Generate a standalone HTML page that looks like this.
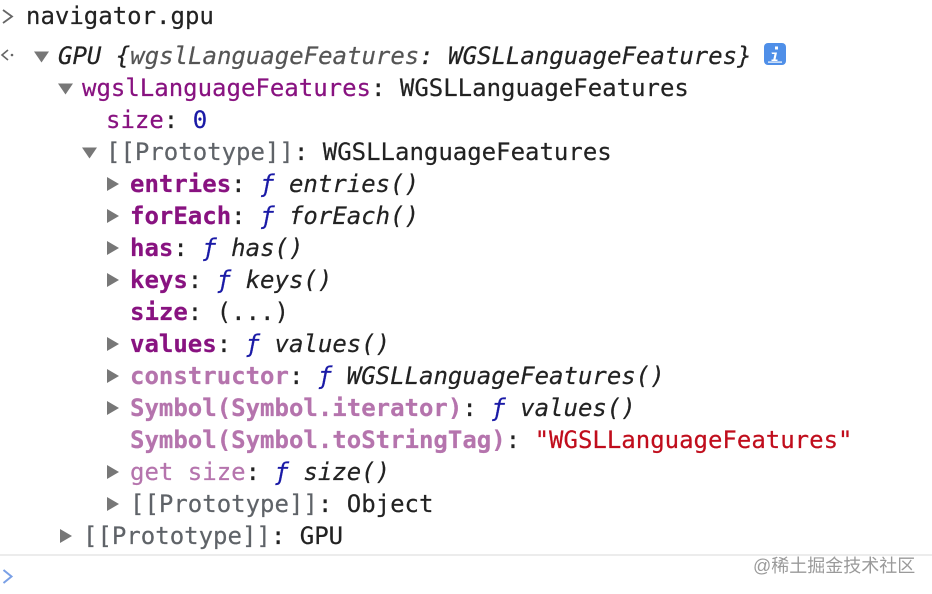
<!DOCTYPE html>
<html><head><meta charset="utf-8">
<style>
html,body{margin:0;padding:0;background:#fff;width:932px;height:594px;overflow:hidden}
#c{position:relative;width:932px;height:594px;font-family:"DejaVu Sans Mono","Liberation Mono",monospace;font-size:24px;line-height:32px;color:#222}
.l{position:absolute;white-space:pre;height:32px;-webkit-text-stroke:0.2px currentColor;filter:blur(0.3px)}
.p{color:#881280}.b{color:#881280;font-weight:bold}.d{color:#b574ad}
.g{color:#5f6368}.n{color:#1a1aa6}.r{color:#c00d1c}.i{font-style:italic}
.k{color:#222}.gi{color:#555;font-style:italic}
.f{color:#1a1aa6;font-style:italic}
svg{position:absolute;left:0;top:0}
.w{position:absolute;left:753px;top:555px;font:18px/22px "Liberation Sans","Noto Sans CJK SC",sans-serif;color:#9a9a9a;white-space:pre}
</style></head><body><div id="c">
<svg width="932" height="594" viewBox="0 0 932 594">
<path d="M3 10l9 6.5-9 6.5" fill="none" stroke="#666" stroke-width="1.8"/>
<path d="M8 50l-6 5 6 5" fill="none" stroke="#666" stroke-width="1.6"/><circle cx="12" cy="55" r="1.3" fill="#666"/>
<path d="M34 51.5h15l-7.500 11z" fill="#777"/>
<path d="M58 83.500h15l-7.500 11z" fill="#777"/>
<path d="M82 147.500h15l-7.500 11z" fill="#777"/>
<path d="M107 177v14l12-7z" fill="#777"/>
<path d="M107 209v14l12-7z" fill="#777"/>
<path d="M107 241v14l12-7z" fill="#777"/>
<path d="M107 273v14l12-7z" fill="#777"/>
<path d="M107 337v14l12-7z" fill="#777"/>
<path d="M107 369v14l12-7z" fill="#777"/>
<path d="M107 401v14l12-7z" fill="#777"/>
<path d="M107 465v14l12-7z" fill="#777"/>
<path d="M107 497v14l12-7z" fill="#777"/>
<path d="M60 529v14l12-7z" fill="#777"/>
<rect x="764" y="43" width="22" height="22" rx="4" fill="#4f8fe8"/>
<path d="M775 46.500h3v3h-3zM771.500 52.500h5.500l-1.500 7h2v1.500h-6v-1.500h1.800l1.200-5.500h-2.500z" fill="#fff"/>
<rect x="768" y="61.500" width="14" height="1.200" fill="#fff"/>
<rect x="0" y="554" width="932" height="2" fill="#ececec"/>
<path d="M3.500 570l8 6.500-8 6.500" fill="none" stroke="#7aa0e6" stroke-width="2"/>
</svg>
<div class="l" style="left:26px;top:0">navigator.gpu</div>
<div class="l i" style="left:58px;top:40px">GPU {<span class="gi">wgslLanguageFeatures</span>: WGSLLanguageFeatures}</div>
<div class="l" style="left:82px;top:72px"><span class="p">wgslLanguageFeatures</span>: WGSLLanguageFeatures</div>
<div class="l" style="left:106px;top:104px"><span class="p">size</span>: <span class="n">0</span></div>
<div class="l" style="left:106px;top:136px"><span class="g">[[Prototype]]</span>: WGSLLanguageFeatures</div>
<div class="l" style="left:130px;top:168px"><span class="b">entries</span>: <span class="f">ƒ</span> <span class="i">entries()</span></div>
<div class="l" style="left:130px;top:200px"><span class="b">forEach</span>: <span class="f">ƒ</span> <span class="i">forEach()</span></div>
<div class="l" style="left:130px;top:232px"><span class="b">has</span>: <span class="f">ƒ</span> <span class="i">has()</span></div>
<div class="l" style="left:130px;top:264px"><span class="b">keys</span>: <span class="f">ƒ</span> <span class="i">keys()</span></div>
<div class="l" style="left:130px;top:296px"><span class="b">size</span>: (...)</div>
<div class="l" style="left:130px;top:328px"><span class="b">values</span>: <span class="f">ƒ</span> <span class="i">values()</span></div>
<div class="l" style="left:130px;top:360px"><span class="d" style="font-weight:bold">constructor</span>: <span class="f">ƒ</span> <span class="i">WGSLLanguageFeatures()</span></div>
<div class="l" style="left:130px;top:392px"><span class="d" style="font-weight:bold">Symbol(Symbol.iterator)</span>: <span class="f">ƒ</span> <span class="i">values()</span></div>
<div class="l" style="left:130px;top:424px"><span class="d" style="font-weight:bold">Symbol(Symbol.toStringTag)</span>: <span class="r">"WGSLLanguageFeatures"</span></div>
<div class="l" style="left:130px;top:456px"><span class="d">get size</span>: <span class="f">ƒ</span> <span class="i">size()</span></div>
<div class="l" style="left:130px;top:488px"><span class="g">[[Prototype]]</span>: Object</div>
<div class="l" style="left:83px;top:520px"><span class="g">[[Prototype]]</span>: GPU</div>
<div class="w">@稀土掘金技术社区</div>
</div></body></html>
